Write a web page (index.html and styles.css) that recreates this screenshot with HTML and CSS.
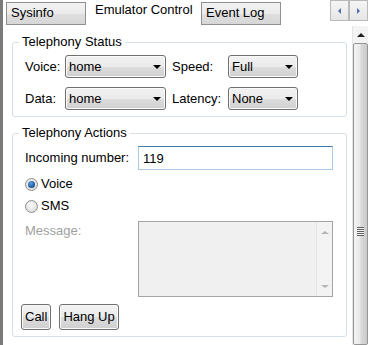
FILE: index.html
```html
<!DOCTYPE html>
<html>
<head>
  <meta http-equiv="Content-Type" content="text/html; charset=UTF-8">
  <title>Emulator Control</title>
  <link rel="stylesheet" href="styles.css">
</head>
<body>
  <div class="window">

    <div class="tabbar">
      <div class="tab">Sysinfo</div>
      <div class="tab tab-active">Emulator Control</div>
      <div class="tab">Event Log</div>
      <div class="tab-spacer"></div>
      <div class="tab-scroll"><i class="tri-left"></i></div>
      <div class="tab-scroll"><i class="tri-right"></i></div>
    </div>

    <div class="page">
      <div class="content">

        <fieldset class="group">
          <legend>Telephony Status</legend>
          <div class="status">
            <span>Voice:</span>
            <div class="combo"><span>home</span><i class="caret"></i></div>
            <span class="status_label">Speed:</span>
            <div class="combo"><span>Full</span><i class="caret"></i></div>

            <span>Data:</span>
            <div class="combo"><span>home</span><i class="caret"></i></div>
            <span class="status_label">Latency:</span>
            <div class="combo"><span>None</span><i class="caret"></i></div>
          </div>
        </fieldset>

        <fieldset class="group">
          <legend>Telephony Actions</legend>

          <div class="field_row">
            <span class="field_label">Incoming number:</span>
            <input class="number" type="text" value="119">
          </div>

          <div class="radio_row radio_first">
            <span class="radio radio-checked"></span><span>Voice</span>
          </div>
          <div class="radio_row">
            <span class="radio"></span><span>SMS</span>
          </div>

          <div class="message_row">
            <span class="field_label field_disabled">Message:</span>
            <div class="memo">
              <div class="memo_text"></div>
              <div class="memo_bar">
                <i class="tri-up-small"></i>
                <i class="tri-down-small"></i>
              </div>
            </div>
          </div>

          <div class="actions">
            <button class="btn">Call</button>
            <button class="btn">Hang Up</button>
          </div>
        </fieldset>

      </div>

      <div class="vscroll">
        <div class="vscroll_up"><i class="tri-up"></i></div>
        <div class="vscroll_thumb"><i class="grip"></i></div>
      </div>
    </div>

  </div>
</body>
</html>
```

FILE: styles.css
```css
body {
  margin: 0;
  background: #fff;
  color: #000;
  font: 13px/16px "Liberation Sans", Arial, sans-serif;
}
.window {
  width: 368px;
  height: 345px;
  box-sizing: border-box;
  border-left: 3px solid #7a7a7a;
  display: flex;
  flex-direction: column;
  overflow: hidden;
}

/* tabs */
.tabbar {
  height: 25px;
  display: flex;
  align-items: flex-end;
  padding-left: 3px;
  flex-shrink: 0;
}
.tab {
  width: 80px;
  height: 23px;
  box-sizing: border-box;
  padding: 2px 4px 0;
  border: 1px solid #8e8f8f;
  background: linear-gradient(#f2f2f2, #ebebeb 50%, #dfdfdf 51%, #d6d6d6);
}
.tab-active {
  width: 115px;
  height: 25px;
  padding: 2px 0 0 9px;
  border: none;
  background: #fff;
}
.tab-spacer {
  flex: 1;
  align-self: stretch;
  border-bottom: 2px solid #fff;
}
.tab-scroll {
  align-self: flex-start;
  width: 19px;
  height: 21px;
  box-sizing: border-box;
  border: 1px solid #b9b9b9;
  background: linear-gradient(#f5f5f5, #e6e6e6);
  display: flex;
  align-items: center;
  justify-content: center;
}
.tri-left {
  border-top: 3px solid transparent;
  border-bottom: 3px solid transparent;
  border-right: 3px solid #4d6fae;
}
.tri-right {
  border-top: 3px solid transparent;
  border-bottom: 3px solid transparent;
  border-left: 3px solid #4d6fae;
}

/* page */
.page {
  flex: 1;
  display: flex;
  padding-top: 1px;
}
.content {
  flex: 1;
  min-width: 0;
}
.group {
  margin: 8px 5px 0 9px;
  padding: 5px 13px 6px 12px;
  border: 1px solid #d5dfe5;
  border-radius: 3px;
  min-width: 0;
}
.group legend {
  margin-left: -6px;
  padding: 0 3px;
  line-height: 16px;
}

.status {
  display: grid;
  grid-template-columns: 40px 101px 62px 70px;
  grid-auto-rows: 23px;
  row-gap: 9px;
  align-items: center;
}
.status_label {
  padding-left: 6px;
}
.combo {
  height: 23px;
  box-sizing: border-box;
  border: 1px solid #707070;
  border-radius: 3px;
  box-shadow: inset 0 0 0 1px #fafafa;
  background: linear-gradient(#f2f2f2, #ebebeb 50%, #dddddd 51%, #cfcfcf);
  display: flex;
  align-items: center;
  justify-content: space-between;
  padding: 0 4px 0 3px;
}
.caret {
  border-left: 4px solid transparent;
  border-right: 4px solid transparent;
  border-top: 4px solid #000;
  margin-top: 1px;
}

.field_row {
  display: flex;
  align-items: center;
}
.field_label {
  width: 113px;
  flex-shrink: 0;
}
.field_disabled {
  color: #a0a0a0;
  padding-top: 2px;
}
.number {
  width: 195px;
  height: 24px;
  box-sizing: border-box;
  margin: 0;
  padding: 0 4px;
  border: 1px solid #a9c9e4;
  border-top-color: #3d7bad;
  font: inherit;
  outline: none;
}

.radio_row {
  display: flex;
  align-items: center;
  gap: 3px;
  height: 22px;
}
.radio_first {
  margin-top: 3px;
}
.radio {
  width: 13px;
  height: 13px;
  box-sizing: border-box;
  border-radius: 50%;
  border: 1px solid #8e8f8f;
  background: radial-gradient(circle at 45% 40%, #fdfdfd, #e2e2e2 60%, #cfcfcf);
  display: flex;
  align-items: center;
  justify-content: center;
}
.radio-checked::after {
  content: "";
  width: 7px;
  height: 7px;
  border-radius: 50%;
  background: radial-gradient(circle at 40% 35%, #5aa3e0, #1b5797 65%, #123f73);
}

.message_row {
  display: flex;
  align-items: flex-start;
  margin-top: 4px;
}
.memo {
  width: 195px;
  height: 76px;
  box-sizing: border-box;
  border: 1px solid #a5a5a5;
  background: #f0f0f0;
  display: flex;
}
.memo_text {
  flex: 1;
}
.memo_bar {
  width: 15px;
  border-left: 1px solid #e4e4e4;
  background: #f3f3f3;
  display: flex;
  flex-direction: column;
  align-items: center;
  justify-content: space-between;
  padding: 9px 0 8px;
}
.tri-up-small {
  border-left: 4px solid transparent;
  border-right: 4px solid transparent;
  border-bottom: 3px solid #b4b4b4;
}
.tri-down-small {
  border-left: 4px solid transparent;
  border-right: 4px solid transparent;
  border-top: 3px solid #b4b4b4;
}

.actions {
  display: flex;
  gap: 8px;
  margin: 7px 0 0 -4px;
}
.btn {
  height: 26px;
  margin: 0;
  padding: 0 3px;
  border: 1px solid #707070;
  border-radius: 3px;
  box-shadow: inset 0 0 0 1px #fafafa;
  background: linear-gradient(#f2f2f2, #ebebeb 50%, #dddddd 51%, #cfcfcf);
  font: inherit;
  color: #000;
}

/* vertical scrollbar */
.vscroll {
  width: 15px;
  display: flex;
  flex-direction: column;
  border-left: 1px solid #e6e6e6;
  background: #f4f4f4;
}
.vscroll_up {
  height: 17px;
  display: flex;
  align-items: center;
  justify-content: center;
}
.tri-up {
  border-left: 4px solid transparent;
  border-right: 4px solid transparent;
  border-bottom: 4px solid #222;
}
.vscroll_thumb {
  flex: 1;
  border: 1px solid #969696;
  border-radius: 2px;
  background: linear-gradient(to right, #f4f4f4, #e9e9e9 45%, #d9d9d9 55%, #cbcbcb);
  display: flex;
  justify-content: center;
  padding-top: 183px;
}
.grip {
  width: 7px;
  height: 9px;
  background: repeating-linear-gradient(#5f5f5f 0 1px, #f4f4f4 1px 2px);
}
```
